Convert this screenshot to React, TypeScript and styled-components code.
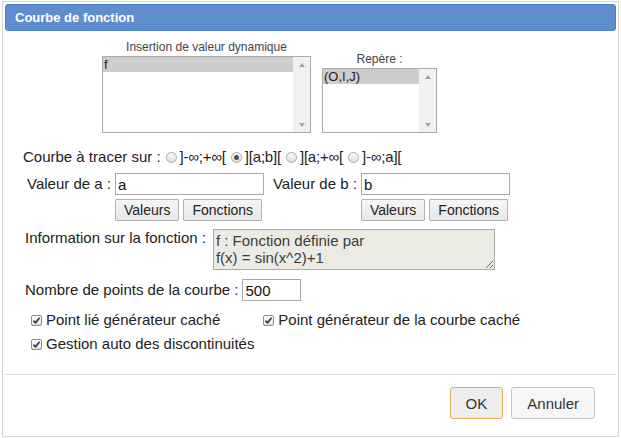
import React from "react";
import styled, { createGlobalStyle } from "styled-components";

const GlobalStyle = createGlobalStyle`
  html, body { margin: 0; padding: 0; background: #fff; }
  body { font-family: "Liberation Sans", Arial, sans-serif; color: #222; }
  * { box-sizing: border-box; }
`;

const Dialog = styled.div`
  margin: 1px 0 0 2px;
  width: 617px;
  height: 436px;
  border: 1px solid #d6d6d6;
  padding: 2px;
  display: flex;
  flex-direction: column;
  background: #fff;
`;

const TitleBar = styled.div`
  height: 27px;
  flex: none;
  background: #5f8ecf;
  border: 1px solid #4a7fcf;
  border-radius: 3px;
  color: #fff;
  font-weight: bold;
  font-size: 13px;
  display: flex;
  align-items: center;
  padding-left: 9px;
`;

const Body = styled.div`
  flex: 1;
  padding-top: 9px;
  font-size: 15px;
`;

const Row = styled.div<{ $indent: number; $top: number; $gap?: number }>`
  display: flex;
  align-items: flex-start;
  padding-left: ${(p) => p.$indent}px;
  margin-top: ${(p) => p.$top}px;
  gap: ${(p) => p.$gap ?? 0}px;
`;

const ListGroup = styled.div<{ $offset: number }>`
  display: flex;
  flex-direction: column;
  align-items: center;
  margin-top: ${(p) => p.$offset}px;
`;

const ListCaption = styled.div`
  font-size: 12px;
  line-height: 14px;
  color: #444;
  margin-bottom: 2px;
`;

const ListBox = styled.div<{ $w: number; $h: number }>`
  width: ${(p) => p.$w}px;
  height: ${(p) => p.$h}px;
  border: 1px solid #a9a9a9;
  display: flex;
  background: #fff;
`;

const ListItems = styled.div`
  flex: 1;
  font-size: 13px;
`;

const ListItem = styled.div<{ $selected?: boolean }>`
  height: 15px;
  line-height: 15px;
  padding-left: 1px;
  background: ${(p) => (p.$selected ? "#cdcdcd" : "transparent")};
  color: #222;
`;

const ScrollTrack = styled.div`
  width: 17px;
  background: #f1f1f1;
  display: flex;
  flex-direction: column;
  justify-content: space-between;
  align-items: center;
  padding: 6px 0 5px;
`;

const Arrow = styled.div<{ $down?: boolean }>`
  width: 0;
  height: 0;
  border-left: 3.5px solid transparent;
  border-right: 3.5px solid transparent;
  ${(p) =>
    p.$down
      ? "border-top: 4px solid #a3a3a3;"
      : "border-bottom: 4px solid #a3a3a3;"}
`;

const Text = styled.span`
  line-height: 18px;
  white-space: nowrap;
`;

const Option = styled.label<{ $shift?: number }>`
  display: flex;
  align-items: center;
  line-height: 18px;
  white-space: nowrap;
  margin-left: ${(p) => p.$shift ?? 0}px;
`;

const RadioDot = styled.span<{ $checked?: boolean }>`
  width: 11px;
  height: 11px;
  border-radius: 50%;
  border: 1px solid #a8a8a8;
  background: linear-gradient(#fbfbfb, #dedede);
  margin: 0 3px 0 5px;
  display: inline-flex;
  align-items: center;
  justify-content: center;
  &::after {
    content: "";
    width: 5px;
    height: 5px;
    border-radius: 50%;
    background: ${(p) => (p.$checked ? "#4e4e4e" : "transparent")};
  }
`;

const Interval = styled.span`
  font-size: 15px;
  letter-spacing: -0.2px;
`;

const Field = styled.div`
  display: flex;
  align-items: flex-start;
  gap: 4px;
`;

const FieldLabel = styled.span`
  line-height: 21px;
  white-space: nowrap;
`;

const FieldColumn = styled.div`
  display: flex;
  flex-direction: column;
  gap: 4px;
`;

const TextInput = styled.input<{ $w: number }>`
  width: ${(p) => p.$w}px;
  height: 22px;
  border: 1px solid #a9a9a9;
  padding: 1px 2px;
  font: 15px "Liberation Sans", Arial, sans-serif;
  color: #111;
  outline: none;
`;

const ButtonRow = styled.div`
  display: flex;
  gap: 4px;
`;

const SmallButton = styled.button`
  height: 22px;
  padding: 0 8px;
  font: 14px "Liberation Sans", Arial, sans-serif;
  color: #222;
  background: linear-gradient(#f6f6f6, #e6e6e6);
  border: 1px solid #b3b3b3;
  border-radius: 1px;
`;

const InfoArea = styled.textarea`
  width: 282px;
  height: 41px;
  border: 1px solid #a9a9a9;
  background: #ebebe4;
  color: #3c3c3c;
  font: 15px "Liberation Sans", Arial, sans-serif;
  line-height: 17px;
  padding: 2px 2px;
  overflow: hidden;
  resize: both;
  outline: none;
`;

const CheckBox = styled.span`
  width: 11px;
  height: 11px;
  border: 1px solid #8e8e8e;
  border-radius: 2px;
  background: linear-gradient(#ffffff, #e2e2e2);
  margin: 0 4px 0 0;
  display: inline-flex;
  align-items: center;
  justify-content: center;
`;

const Footer = styled.div`
  flex: none;
  height: 60px;
  border-top: 1px solid #dddddd;
  display: flex;
  justify-content: flex-end;
  align-items: flex-start;
  padding: 12px 21px 0 0;
  gap: 8px;
`;

const DialogButton = styled.button<{ $primary?: boolean }>`
  height: 32px;
  padding: 0 15px;
  font: 15px "Liberation Sans", Arial, sans-serif;
  color: #333;
  border-radius: 3px;
  background: ${(p) => (p.$primary ? "#ededed" : "#f6f6f6")};
  border: 1px solid ${(p) => (p.$primary ? "#e6ae54" : "#c5c5c5")};
`;

const Check = () => (
  <CheckBox>
    <svg width="9" height="9" viewBox="0 0 9 9">
      <path d="M1.5 4.6 L3.6 6.8 L7.6 1.8" fill="none" stroke="#333" strokeWidth="1.7" />
    </svg>
  </CheckBox>
);

const List = ({ w, h, items }: { w: number; h: number; items: string[] }) => (
  <ListBox $w={w} $h={h}>
    <ListItems>
      {items.map((it, i) => (
        <ListItem key={it} $selected={i === 0}>
          {it}
        </ListItem>
      ))}
    </ListItems>
    <ScrollTrack>
      <Arrow />
      <Arrow $down />
    </ScrollTrack>
  </ListBox>
);

const ValueField = ({ label, value }: { label: string; value: string }) => (
  <Field>
    <FieldLabel>{label}</FieldLabel>
    <FieldColumn>
      <TextInput $w={149} value={value} readOnly />
      <ButtonRow>
        <SmallButton>Valeurs</SmallButton>
        <SmallButton>Fonctions</SmallButton>
      </ButtonRow>
    </FieldColumn>
  </Field>
);

const radios = [
  { label: "]-∞;+∞[", checked: false },
  { label: "][a;b][", checked: true },
  { label: "][a;+∞[", checked: false },
  { label: "]-∞;a][", checked: false },
];

export default function App() {
  return (
    <>
      <GlobalStyle />
      <Dialog>
        <TitleBar>Courbe de fonction</TitleBar>
        <Body>
          <Row $indent={97} $top={0} $gap={11}>
            <ListGroup $offset={0}>
              <ListCaption>Insertion de valeur dynamique</ListCaption>
              <List w={209} h={77} items={["f"]} />
            </ListGroup>
            <ListGroup $offset={12}>
              <ListCaption>Repère :</ListCaption>
              <List w={115} h={65} items={["(O,I,J)"]} />
            </ListGroup>
          </Row>
          <Row $indent={18} $top={15}>
            <Text>Courbe à tracer sur :</Text>
            {radios.map((r) => (
              <Option key={r.label}>
                <RadioDot $checked={r.checked} />
                <Interval>{r.label}</Interval>
              </Option>
            ))}
          </Row>
          <Row $indent={22} $top={7} $gap={9}>
            <ValueField label="Valeur de a :" value="a" />
            <ValueField label="Valeur de b :" value="b" />
          </Row>
          <Row $indent={20} $top={8} $gap={7}>
            <Text>Information sur la fonction :</Text>
            <InfoArea readOnly value={"f : Fonction définie par\nf(x) = sin(x^2)+1"} />
          </Row>
          <Row $indent={20} $top={9} $gap={4}>
            <FieldLabel>Nombre de points de la courbe :</FieldLabel>
            <TextInput $w={59} value="500" readOnly />
          </Row>
          <Row $indent={26} $top={10}>
            <Option>
              <Check />
              Point lié générateur caché
            </Option>
            <Option $shift={43}>
              <Check />
              Point générateur de la courbe caché
            </Option>
          </Row>
          <Row $indent={26} $top={6}>
            <Option>
              <Check />
              Gestion auto des discontinuités
            </Option>
          </Row>
        </Body>
        <Footer>
          <DialogButton $primary>OK</DialogButton>
          <DialogButton>Annuler</DialogButton>
        </Footer>
      </Dialog>
    </>
  );
}
